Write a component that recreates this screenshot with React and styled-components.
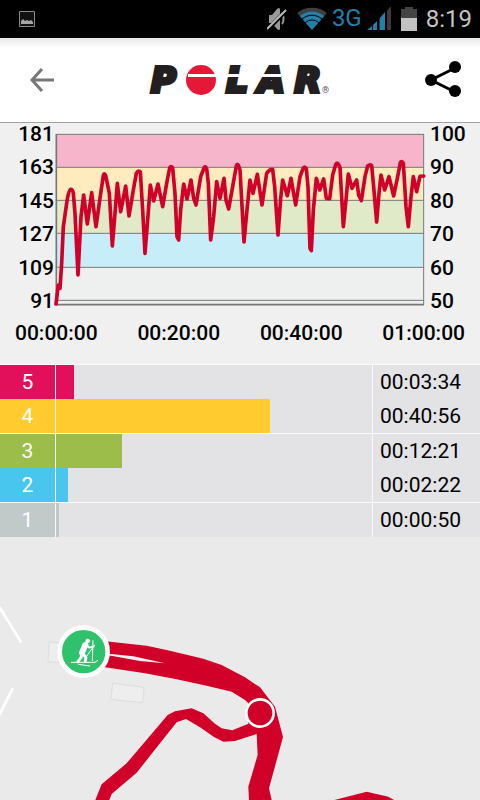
import React from "react";
import styled, { createGlobalStyle } from "styled-components";

const GlobalStyle = createGlobalStyle`
  * { box-sizing: border-box; }
  body {
    margin: 0;
    background: #eaeaea;
    font-family: Roboto, "Noto Sans", sans-serif;
  }
`;

const Screen = styled.div`
  display: flex;
  flex-direction: column;
  min-height: 100vh;
  color: #000;
`;

const StatusBar = styled.div`
  display: flex;
  align-items: center;
  height: 38px;
  padding: 0 8px 0 19px;
  background: #000;
`;

const StatusIcon = styled.svg`
  display: block;
  flex: none;
  margin-left: ${(p) => p.$gap || 0}px;
`;

const Spacer = styled.div`
  flex: 1;
`;

const Network = styled.span`
  margin-left: 5px;
  font-size: 24px;
  line-height: 36px;
  align-self: flex-start;
  color: #2380ab;
`;

const Clock = styled.span`
  margin-left: 9px;
  font-size: 24px;
  line-height: 38px;
  color: #c4c4c4;
`;

const Header = styled.header`
  display: grid;
  grid-template-columns: 84px 1fr 84px;
  align-items: center;
  height: 85px;
  background: linear-gradient(#e9e9e9, #fff 10px);
  border-bottom: 1px solid #a2a2a2;
`;

const IconButton = styled.button`
  display: flex;
  align-items: center;
  justify-content: ${(p) => p.$align || "center"};
  height: 84px;
  padding: 0 ${(p) => (p.$align ? 18 : 0)}px 0 0;
  border: 0;
  background: none;
`;

const Brand = styled.div`
  display: flex;
  align-items: flex-end;
  justify-content: center;
`;

const Wordmark = styled.div`
  position: relative;
  display: flex;
  align-items: center;
  justify-content: space-between;
  width: 170px;
  height: 30px;
  font: italic 700 34px/30px "DejaVu Sans", sans-serif;
  color: #231f20;
  -webkit-text-stroke: 4px #231f20;
`;

const Stripe = styled.span`
  position: absolute;
  left: 37px;
  right: 40px;
  top: 9px;
  height: 3px;
  background: #fff;
`;

const Registered = styled.span`
  margin-left: 1px;
  font-size: 9px;
  line-height: 9px;
  color: #555;
`;

const ChartPanel = styled.section`
  padding-bottom: 19px;
  background: #f0f0f0;
  font-size: 21px;
  font-weight: 500;
`;

const ChartRow = styled.div`
  display: grid;
  grid-template-columns: 54px 1fr 54px;
  height: 189px;
`;

const AxisLabels = styled.div`
  display: flex;
  flex-direction: column;
  justify-content: space-between;
  padding-left: ${(p) => (p.$right ? 4 : 0)}px;
  text-align: ${(p) => (p.$right ? "left" : "right")};
  line-height: 22px;
`;

const Plot = styled.svg`
  display: block;
  width: 100%;
  height: 178px;
  margin-top: 7px;
`;

const TimeLabels = styled.div`
  display: flex;
  justify-content: space-between;
  padding: 9px 15px 0;
  line-height: 24px;
`;

const ZoneTable = styled.table`
  width: 100%;
  table-layout: fixed;
  border-spacing: 0;
  background: #e3e3e5;
  font-size: 21px;
  line-height: 34px;
`;

const ZoneRow = styled.tr`
  > * {
    height: 34px;
    padding: 0;
    border-top: ${(p) => (p.$line ? "1px solid #fafafa" : "0")};
  }
`;

const ZoneNumber = styled.th`
  width: 56px;
  border-right: 1px solid #fafafa;
  background: ${(p) => p.$color};
  background-clip: padding-box;
  color: #fff;
  font-weight: 400;
`;

const ZoneBar = styled.div`
  height: 34px;
  background: ${(p) => p.$color};
`;

const ZoneTime = styled.td`
  width: 108px;
  && { padding-left: 7px; }
  border-left: 1px solid #fafafa;
`;

const RouteMap = styled.svg`
  display: block;
  flex: 1;
  width: 100%;
  min-height: 260px;
  background: #eaeaea;
`;

const zones = [
  { id: 5, color: "#e2105b", share: 5.7, time: "00:03:34", line: true },
  { id: 4, color: "#ffcb2e", share: 67.7, time: "00:40:56" },
  { id: 3, color: "#9dbd4a", share: 20.9, time: "00:12:21", line: true },
  { id: 2, color: "#49c6ee", share: 3.8, time: "00:02:22" },
  { id: 1, color: "#c2c9c9", share: 1, time: "00:00:50", line: true },
];

const bands = [
  { y: 13, h: 99, color: "#f6b5cb" },
  { y: 112, h: 99, color: "#ffecbe" },
  { y: 211, h: 99, color: "#e0eac8" },
  { y: 310, h: 102, color: "#c7edf9" },
  { y: 412, h: 112, color: "#edf0ee" },
];

const heartRate =
  "M6 522 L13 465 L18 475 L23 400 L28 290 L38 220 Q44 178 50 178 Q56 178 58 190 L63 250 L72 435 L81 260 L89 195 L100 282 L113 188 L126 290 L138 205 L148 137 Q151 126 155 137 L166 190 L175 348 L183 250 L190 160 L200 245 L215 168 L225 258 L238 180 L247 130 Q253 119 259 126 L266 240 L273 370 L281 270 L289 165 L299 213 L312 162 L326 230 L338 160 L347 114 Q351 106 356 114 L363 190 L369 320 L374 330 L380 240 L389 162 L399 207 L411 150 L419 205 L426 225 L440 140 L450 114 Q454 106 458 116 L463 160 L470 330 L479 260 L488 155 L498 205 L510 145 L516 210 L524 237 L536 170 L547 108 Q550 98 554 108 L558 120 L570 336 L578 250 L588 150 L597 190 L610 133 L624 225 L638 130 Q645 118 656 118 L662 170 L672 315 L680 205 L686 150 L700 197 L711 145 L725 225 L738 140 L748 114 Q753 108 757 116 L762 170 L768 355 L772 362 L778 240 L787 145 L797 180 L809 147 L817 205 L827 206 L836 135 L845 104 Q849 94 854 104 L858 112 L868 290 L876 210 L883 132 L894 175 L908 150 L914 195 L922 212 L933 140 L941 108 Q948 102 953 107 L959 170 L968 276 L975 190 L981 135 L992 180 L1005 140 L1019 198 L1033 130 L1039 98 Q1043 90 1048 100 L1056 230 L1063 290 L1071 200 L1078 140 L1088 185 L1098 139 L1109 138";

function StatusIcons() {
  return (
    <>
      <StatusIcon width="16" height="16" viewBox="0 0 16 16">
        <path d="M.5.5h15v15H.5z" fill="#111" stroke="#8a8a8a" />
        <path d="M2 13v-3l2-2 2 2 2-1 2 1 2-1 2 2v2z" fill="#a5a5a5" />
      </StatusIcon>
      <Spacer />
      <StatusIcon width="20" height="24" viewBox="0 0 20 24">
        <path d="M2 8h3l5-6c2-2 3-1 3 1v18c0 2-1 3-3 1l-5-6H2z" fill="#999" />
        <path d="M15 7c2 2 2 8 0 10" fill="none" stroke="#999" strokeWidth="2" />
        <path d="M1 22 20 3" stroke="#000" strokeWidth="4" />
        <path d="M0 22 19 3" stroke="#bbb" strokeWidth="2" />
      </StatusIcon>
      <StatusIcon $gap={10} width="30" height="24" viewBox="0 0 30 24">
        <path d="M0 6C8-1 22-1 30 6L15 23z" fill="#3f3f3f" />
        <path d="M3 9c7-6 17-6 24 0L15 23z" fill="#267fa8" />
        <path d="M5 12c6-5 14-5 20 0M8 16c4-4 10-4 14 0" fill="none" stroke="#000" strokeWidth="1" />
      </StatusIcon>
      <Network>3G</Network>
      <StatusIcon $gap={5} width="24" height="24" viewBox="0 0 24 24">
        <path d="m0 23 5-4v4zM6 18l4-4v9H6zM12 12l4-4v15h-4z" fill="#2380ab" />
        <path d="m13 11 5-6v18h-5z" fill="#2380ab" />
        <path d="M12 6v18" stroke="#000" />
        <path d="m20 4 4-5v24h-4z" fill="#3b3b3b" />
      </StatusIcon>
      <StatusIcon $gap={10} width="16" height="24" viewBox="0 0 16 24">
        <path d="M0 2h4V0h8v2h4v22H0z" fill="#444" />
        <path d="M0 11h16v13H0z" fill="#c2c2c2" />
      </StatusIcon>
    </>
  );
}

function HeartRateChart() {
  return (
    <Plot viewBox="0 0 1116 534" preserveAspectRatio="none" role="img" aria-label="Heart rate">
      {bands.map((b) => (
        <rect key={b.y} x="7" y={b.y} width="1102" height={b.h} fill={b.color} />
      ))}
      <path
        d="M7 13H1109M7 112H1109M7 211H1109M7 310H1109M7 412H1109M7 511H1109M1109 12V524"
        stroke="#777"
        strokeWidth="3"
      />
      <path d="M7 12V524H1110" fill="none" stroke="#777" strokeWidth="5" />
      <path d={heartRate} fill="none" stroke="#d10029" strokeWidth="11" strokeLinejoin="round" strokeLinecap="round" />
    </Plot>
  );
}

function Route() {
  return (
    <RouteMap viewBox="0 0 1440 789" preserveAspectRatio="xMinYMin slice" role="img" aria-label="Training route">
      <path d="M-8 200 62 314M-10 549 37 457" stroke="#fff" strokeWidth="8" strokeLinecap="round" />
      <path d="m148 315 50 4-4 58-50-3zM338 439l94 12-4 46-96-10z" fill="#eee" stroke="#ddd" strokeWidth="3" />
      <g fill="#d10029">
        <path d="M310 312 440 326 500 339 610 365 665 384 735 421 780 451 825 509 849 600 807 754 815 789H747L745 749 773 654 770 591 705 612 670 614 642 600 600 571 558 546 530 556 410 707 335 771 328 789H286L305 742 380 679 503 534 525 523 575 514 610 529 645 560 665 574 697 580 745 560 745 499 735 489 695 464 620 446 530 427 435 409 310 390z" />
        <path d="m1003 789 97-25 65 15 17 10z" />
      </g>
      <path d="m325 350 75 8 95 21-75-7-95-17z" fill="#f7efef" />
      <circle cx="251" cy="344" r="72" fill="#2fc16c" stroke="#fff" strokeWidth="14" />
      <g fill="none" stroke="#fff" strokeLinecap="round" strokeLinejoin="round">
        <circle cx="263" cy="312" r="6" fill="#fff" strokeWidth="2" />
        <path d="m256 324-10 23" strokeWidth="18" />
        <path d="m245 348-1 12-10 14M249 350l9 12-2 10" strokeWidth="9" />
        <path d="m258 322 10 10 13-4" strokeWidth="6" />
        <path d="m279 311-2 60M284 324l-23 32M214 376h71l8-6M235 382l34 5" strokeWidth="3" />
      </g>
      <circle cx="780" cy="528" r="41" fill="#d10029" stroke="#fff" strokeWidth="8" />
    </RouteMap>
  );
}

export default function App() {
  return (
    <Screen>
      <GlobalStyle />
      <StatusBar>
        <StatusIcons />
        <Clock>8:19</Clock>
      </StatusBar>
      <Header>
        <IconButton aria-label="Back">
          <svg width="24" height="24" viewBox="0 0 24 24">
            <path d="M12 1 2 12l10 11M2 12h22" fill="none" stroke="#777" strokeWidth="3" />
          </svg>
        </IconButton>
        <Brand>
          <Wordmark>
            <span>P</span>
            <svg width="30" height="30" viewBox="0 0 30 30">
              <circle cx="15" cy="15" r="15" fill="#e51937" />
            </svg>
            <span>L</span>
            <span>A</span>
            <span>R</span>
            <Stripe />
          </Wordmark>
          <Registered>®</Registered>
        </Brand>
        <IconButton aria-label="Share" $align="flex-end">
          <svg width="38" height="38" viewBox="0 0 38 38">
            <path d="M31 7 7 19l24 12" fill="none" stroke="#000" strokeWidth="3" />
            <circle cx="31" cy="6" r="6" />
            <circle cx="7" cy="19" r="6" />
            <circle cx="31" cy="30" r="6" />
          </svg>
        </IconButton>
      </Header>
      <ChartPanel>
        <ChartRow>
          <AxisLabels>
            {[181, 163, 145, 127, 109, 91].map((v) => (
              <span key={v}>{v}</span>
            ))}
          </AxisLabels>
          <HeartRateChart />
          <AxisLabels $right>
            {[100, 90, 80, 70, 60, 50].map((v) => (
              <span key={v}>{v}</span>
            ))}
          </AxisLabels>
        </ChartRow>
        <TimeLabels>
          {["00:00:00", "00:20:00", "00:40:00", "01:00:00"].map((t) => (
            <span key={t}>{t}</span>
          ))}
        </TimeLabels>
      </ChartPanel>
      <ZoneTable aria-label="Time in heart rate zones">
        <tbody>
          {zones.map((z) => (
            <ZoneRow key={z.id} $line={z.line}>
              <ZoneNumber scope="row" $color={z.color}>{z.id}</ZoneNumber>
              <td>
                <ZoneBar $color={z.color} style={{ width: `${z.share}%` }} />
              </td>
              <ZoneTime>{z.time}</ZoneTime>
            </ZoneRow>
          ))}
        </tbody>
      </ZoneTable>
      <Route />
    </Screen>
  );
}
